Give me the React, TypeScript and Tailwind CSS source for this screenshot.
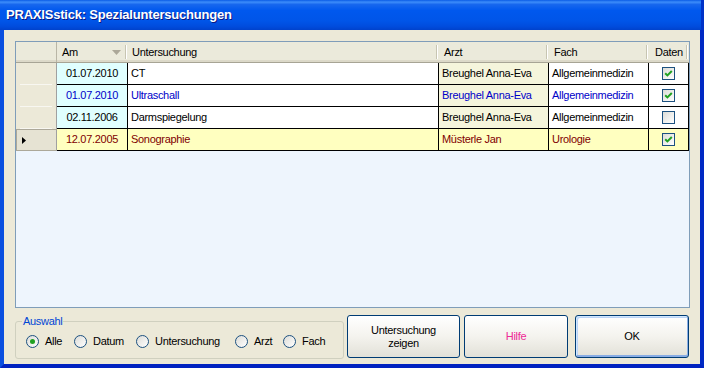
import React from "react";

type Row = {
  date: string;
  unt: string;
  arzt: string;
  fach: string;
  checked: boolean;
  tone: "normal" | "blue" | "sel";
};

const rows: Row[] = [
  { date: "01.07.2010", unt: "CT", arzt: "Breughel Anna-Eva", fach: "Allgemeinmedizin", checked: true, tone: "normal" },
  { date: "01.07.2010", unt: "Ultraschall", arzt: "Breughel Anna-Eva", fach: "Allgemeinmedizin", checked: true, tone: "blue" },
  { date: "02.11.2006", unt: "Darmspiegelung", arzt: "Breughel Anna-Eva", fach: "Allgemeinmedizin", checked: false, tone: "normal" },
  { date: "12.07.2005", unt: "Sonographie", arzt: "Müsterle Jan", fach: "Urologie", checked: true, tone: "sel" },
];

function CheckBox({ checked }: { checked: boolean }) {
  return (
    <div className="w-[13px] h-[13px] border border-[#1C5180] bg-linear-to-br from-[#DCDCD7] to-white flex items-center justify-center">
      {checked && (
        <svg width="11" height="11" viewBox="0 0 11 11">
          <path d="M2.2 5.2 L4.4 7.4 L8.8 3" stroke="#21A121" strokeWidth="2" fill="none" />
        </svg>
      )}
    </div>
  );
}

function Radio({ checked }: { checked: boolean }) {
  return (
    <div className="w-[13px] h-[13px] shrink-0 rounded-full border border-[#1C5180] bg-linear-to-br from-[#DCDCD7] to-white flex items-center justify-center">
      {checked && <div className="w-[5px] h-[5px] rounded-full bg-[#21A121]" />}
    </div>
  );
}

function HeaderSep() {
  return <div className="ml-auto mr-[1px] h-[14px] w-[2px] border-l border-[#C7C5B2] border-r border-r-white" />;
}

export default function App() {
  return (
    <div className="w-[704px] h-[368px] flex flex-col font-['Liberation_Sans',Arial,sans-serif] text-[11px] tracking-[-0.3px] text-black select-none">
      {/* Title bar */}
      <div className="h-[30px] shrink-0 flex items-center pl-[6px] bg-[linear-gradient(to_bottom,#0A5CE6_0%,#3D8DFA_7%,#1767EE_15%,#0058EE_35%,#0055E8_70%,#004CDD_88%,#0042CC_100%)] border-r-[3px] border-r-[#0033C8]">
        <span className="text-white font-bold text-[13px] tracking-[-0.2px] [text-shadow:1px_1px_0_#0A1883]">
          PRAXISstick: Spezialuntersuchungen
        </span>
      </div>

      {/* Window body with frame */}
      <div className="flex-1 flex border-l-4 border-l-[#0A4FE0] border-r-4 border-r-[#0029C4] border-b-4 border-b-[#0022C0]">
        <div className="flex-1 bg-[#ECE9D8] flex flex-col pl-[11px] pt-[11px]">
          {/* Grid */}
          <div className="w-[675px] h-[267px] border border-[#7F9DB9] bg-[#EEF5FD] flex flex-col">
            {/* Header */}
            <div className="h-[21px] flex bg-[#EBEADB] border-b border-[#A7A495] shadow-[inset_0_-2px_0_#DCD9C9]">
              <div className="w-[41px] h-full flex items-center border-r border-[#B9B6A6]" />
              <div className="w-[71px] h-full flex items-center pl-[5px]">
                <span>Am</span>
                <svg className="ml-auto mr-[4px]" width="9" height="5" viewBox="0 0 9 5">
                  <polygon points="0,0 9,0 4.5,5" fill="#ACA899" />
                </svg>
                <div className="mr-[1px] h-[14px] w-[2px] border-l border-[#C7C5B2] border-r border-r-white" />
              </div>
              <div className="w-[311px] h-full flex items-center pl-[4px]">
                <span>Untersuchung</span>
                <HeaderSep />
              </div>
              <div className="w-[110px] h-full flex items-center pl-[5px]">
                <span>Arzt</span>
                <HeaderSep />
              </div>
              <div className="w-[100px] h-full flex items-center pl-[5px]">
                <span>Fach</span>
                <HeaderSep />
              </div>
              <div className="w-[40px] h-full flex items-center pl-[6px]">
                <span>Daten</span>
                <HeaderSep />
              </div>
            </div>

            {/* Rows */}
            {rows.map((r, i) => {
              const sel = r.tone === "sel";
              const textColor =
                r.tone === "blue" ? "text-[#0000C8]" : sel ? "text-[#800000]" : "text-black";
              return (
                <div key={i} className={`h-[22px] flex ${textColor}`}>
                  {sel ? (
                    <div className="w-[41px] h-full flex items-center pl-[5px] bg-[#E6E3D3] border border-[#ACA899] border-r-[#A0A0A0]">
                      <svg width="4" height="7" viewBox="0 0 4 7">
                        <polygon points="0,0 4,3.5 0,7" fill="#000" />
                      </svg>
                    </div>
                  ) : (
                    <div className="w-[41px] h-full flex flex-col justify-end bg-[#ECE9D8] border-r border-[#A0A0A0]">
                      <div className="mx-[4px] h-px bg-[#F8F7F1]" />
                    </div>
                  )}
                  <div
                    className={`w-[71px] h-full flex items-center justify-center border-r border-b border-black ${
                      sel ? "bg-[#FFFFC0]" : "bg-[#E0FFFF]"
                    }`}
                  >
                    {r.date}
                  </div>
                  <div
                    className={`w-[311px] h-full flex items-center pl-[3px] border-r border-b border-black ${
                      sel ? "bg-[#FFFFC0]" : "bg-white"
                    }`}
                  >
                    {r.unt}
                  </div>
                  <div
                    className={`w-[110px] h-full flex items-center pl-[3px] border-r border-b border-black ${
                      sel ? "bg-[#FFFFC0]" : "bg-[#F5F5DC]"
                    }`}
                  >
                    {r.arzt}
                  </div>
                  <div
                    className={`w-[100px] h-full flex items-center pl-[3px] border-r border-b border-black ${
                      sel ? "bg-[#FFFFC0]" : "bg-white"
                    }`}
                  >
                    {r.fach}
                  </div>
                  <div
                    className={`w-[40px] h-full flex items-center justify-center border-r border-b border-black ${
                      sel ? "bg-[#FFFFC0]" : "bg-white"
                    }`}
                  >
                    <CheckBox checked={r.checked} />
                  </div>
                </div>
              );
            })}
          </div>

          {/* Bottom area */}
          <div className="flex items-start mt-[7px]">
            <fieldset className="w-[329px] min-w-0 h-[43px] mt-[1px] border border-[#D0D0BF] rounded-[3px] flex items-center">
              <legend className="ml-[6px] px-[1px] text-[#0046D5] leading-[11px]">Auswahl</legend>
              <div className="flex items-center pl-[10px] -mt-[2px]">
                <div className="w-[48px] flex items-center gap-[6px]">
                  <Radio checked />
                  <span>Alle</span>
                </div>
                <div className="w-[62px] flex items-center gap-[6px]">
                  <Radio checked={false} />
                  <span>Datum</span>
                </div>
                <div className="w-[99px] flex items-center gap-[6px]">
                  <Radio checked={false} />
                  <span>Untersuchung</span>
                </div>
                <div className="w-[48px] flex items-center gap-[6px]">
                  <Radio checked={false} />
                  <span>Arzt</span>
                </div>
                <div className="flex items-center gap-[6px]">
                  <Radio checked={false} />
                  <span>Fach</span>
                </div>
              </div>
            </fieldset>

            <button className="ml-[3px] w-[113px] h-[43px] rounded-[3px] border border-[#003C74] bg-linear-to-b from-white via-[#F4F3EE] to-[#E2E1D8] leading-[13px] text-black">
              Untersuchung
              <br />
              zeigen
            </button>
            <button className="ml-[4px] w-[104px] h-[43px] rounded-[3px] border border-[#003C74] bg-linear-to-b from-white via-[#F4F3EE] to-[#E2E1D8] text-[#EE2A96]">
              Hilfe
            </button>
            <button className="ml-[7px] w-[114px] h-[43px] rounded-[3px] border border-[#003C74] bg-linear-to-b from-white via-[#F4F3EE] to-[#E2E1D8] text-black shadow-[inset_1px_1px_0_#CEE7FF,inset_-1px_-1px_0_#89ADE4,inset_0_-2px_0_#89ADE4,inset_2px_2px_0_#BCD4F6]">
              OK
            </button>
          </div>
        </div>
      </div>
    </div>
  );
}
